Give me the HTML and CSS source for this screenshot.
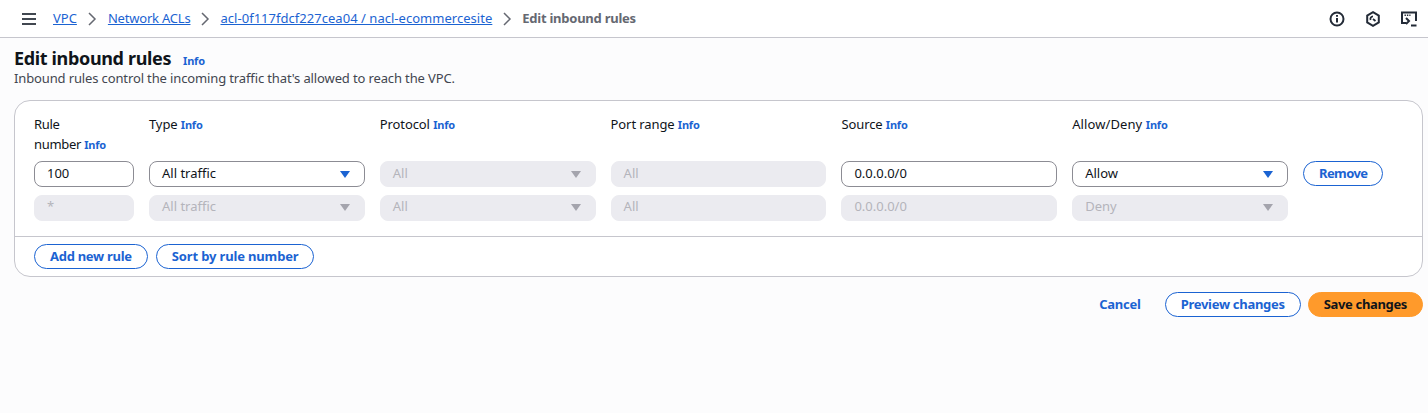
FILE: index.html
```html
<!DOCTYPE html>
<html lang="en">
<head>
    <meta charset="utf-8">
    <title>Edit inbound rules</title>
    <link rel="stylesheet" href="styles.css">
</head>
<body>
    <header class="topbar">
        <svg class="menu-icon" width="16" height="16" viewBox="0 0 16 16"><path d="M1 3h14M1 8h14M1 13h14" fill="none" stroke="#414750" stroke-width="2"/></svg>
        <nav class="crumbs">
            <a href="#">VPC</a>
            <svg class="sep" width="16" height="16" viewBox="0 0 16 16"><path d="M5 2l6 6-6 6" fill="none" stroke="#656871" stroke-width="1.5"/></svg>
            <a class="tight" href="#">Network ACLs</a>
            <svg class="sep" width="16" height="16" viewBox="0 0 16 16"><path d="M5 2l6 6-6 6" fill="none" stroke="#656871" stroke-width="1.5"/></svg>
            <a class="wide" href="#">acl-0f117fdcf227cea04 / nacl-ecommercesite</a>
            <svg class="sep" width="16" height="16" viewBox="0 0 16 16"><path d="M5 2l6 6-6 6" fill="none" stroke="#656871" stroke-width="1.5"/></svg>
            <span class="current">Edit inbound rules</span>
        </nav>
        <div class="tools">
            <svg width="16" height="16" viewBox="0 0 16 16" fill="none" stroke="#232b37" stroke-width="2"><circle cx="8" cy="8" r="6.5"/><path d="M8 7v4.5M8 4v1.8"/></svg>
            <svg width="16" height="16" viewBox="0 0 16 16" fill="none" stroke="#232b37" stroke-width="2"><path d="M8 1.2l5.8 3.4v6.8L8 14.8l-5.8-3.4V4.6z"/><path d="M5.6 9A2.6 2.6 0 0 1 8 5.4M8 8l2.5 2" stroke-width="1.8"/></svg>
            <svg width="16" height="16" viewBox="0 0 16 16" fill="none" stroke="#232b37" stroke-width="2"><path d="M5 12H1V1.5h14V10"/><path d="M3.5 4.2h6" stroke-width="1.4" stroke-dasharray="1.4 1"/><path d="M5 7l3 3-3 3M10 14.5h5.5"/></svg>
        </div>
    </header>

    <main class="page">
        <div class="title-row">
            <h1>Edit inbound rules</h1>
            <a class="info" href="#">Info</a>
        </div>
        <p class="desc">Inbound rules control the incoming traffic that's allowed to reach the VPC.</p>

        <section class="card">
            <div class="rules">
                <div class="rule-grid">
                    <div class="head head-narrow">Rule number <a class="info" href="#">Info</a></div>
                    <div class="head">Type <a class="info" href="#">Info</a></div>
                    <div class="head">Protocol <a class="info" href="#">Info</a></div>
                    <div class="head">Port range <a class="info" href="#">Info</a></div>
                    <div class="head">Source <a class="info" href="#">Info</a></div>
                    <div class="head head-wide">Allow/Deny <a class="info" href="#">Info</a></div>
                    <div></div>

                    <div class="field">100</div>
                    <div class="field select">All traffic</div>
                    <div class="field off select">All</div>
                    <div class="field off">All</div>
                    <div class="field">0.0.0.0/0</div>
                    <div class="field select">Allow</div>
                    <div><button class="btn btn-remove">Remove</button></div>

                    <div class="field off blank">*</div>
                    <div class="field off blank select">All traffic</div>
                    <div class="field off blank select">All</div>
                    <div class="field off blank">All</div>
                    <div class="field off blank">0.0.0.0/0</div>
                    <div class="field off blank select">Deny</div>
                    <div></div>
                </div>
            </div>
            <div class="card-foot">
                <button class="btn">Add new rule</button>
                <button class="btn btn-sort">Sort by rule number</button>
            </div>
        </section>

        <div class="actions">
            <a class="cancel" href="#">Cancel</a>
            <button class="btn">Preview changes</button>
            <button class="btn primary">Save changes</button>
        </div>
    </main>
</body>
</html>
```

FILE: styles.css
```css
body {
    margin: 0;
    height: 413px;
    overflow: hidden;
    font-family: "Noto Sans", sans-serif;
    font-size: 13px;
    color: #0f141a;
    background: #fcfcfd;
}
a {
    color: #1b63d2;
}
.topbar {
    display: flex;
    align-items: center;
    height: 37px;
    padding: 0 11px 0 21px;
    background: #fff;
    border-bottom: 1px solid #c6c6cd;
}
.menu-icon {
    margin-right: 16px;
}
.crumbs {
    display: flex;
    align-items: center;
    gap: 7px;
    flex: 1;
    padding-bottom: 2px;
}
.crumbs .tight {
    margin-left: 1px;
    letter-spacing: -0.2px;
}
.crumbs .wide {
    letter-spacing: 0.03px;
}
.crumbs .current {
    font-weight: 700;
    color: #656871;
    letter-spacing: -0.25px;
}
.sep {
    margin-top: 2px;
}
.tools {
    display: flex;
    gap: 20px;
}
.page {
    padding: 8px 5px 0 14px;
}
.title-row {
    display: flex;
    align-items: baseline;
    gap: 12px;
}
h1 {
    margin: 0;
    font-size: 18px;
    line-height: 24px;
    font-weight: 700;
    letter-spacing: -0.35px;
}
.desc {
    margin: -1px 0 13px;
    line-height: 18px;
    color: #424650;
    letter-spacing: -0.13px;
}
.info {
    font-size: 11px;
    font-weight: 700;
    letter-spacing: -0.2px;
    text-decoration: none;
}
.card {
    background: #fff;
    border: 1px solid #c6c6cd;
    border-radius: 16px;
}
.rules {
    padding: 13px 19px 15px;
    border-bottom: 1px solid #c6c6cd;
}
.rule-grid {
    display: grid;
    grid-template-columns: 100px repeat(5, 215.8px) 1fr;
    column-gap: 15px;
    row-gap: 8px;
}
.head {
    line-height: 20px;
    margin-bottom: -2px;
    letter-spacing: -0.1px;
}
.head-narrow {
    width: 75px;
    letter-spacing: -0.3px;
}
.head-wide {
    letter-spacing: 0.1px;
}
.field {
    box-sizing: border-box;
    height: 26px;
    line-height: 23px;
    padding: 0 12px;
    background: #fff;
    border: 1px solid #8c8c94;
    border-radius: 8px;
}
.field.off {
    background: #ebebf0;
    border-color: #ebebf0;
    color: #b4b4bb;
}
.field.blank {
    line-height: 21px;
}
.select {
    position: relative;
}
.select::after {
    content: "";
    position: absolute;
    right: 14px;
    top: 9px;
    border-left: 5px solid transparent;
    border-right: 5px solid transparent;
    border-top: 7px solid #1b63d2;
}
.off.select::after {
    border-top-color: #a4a4ad;
}
.blank.select::after {
    top: 8px;
}
.btn {
    box-sizing: border-box;
    height: 25px;
    padding: 0 15px 2px;
    font-family: inherit;
    font-size: 13px;
    font-weight: 700;
    letter-spacing: -0.28px;
    color: #1b63d2;
    background: #fff;
    border: 1px solid #1b63d2;
    border-radius: 13px;
}
.btn-remove {
    letter-spacing: -0.6px;
}
.btn-sort {
    letter-spacing: -0.15px;
}
.card-foot {
    display: flex;
    gap: 8px;
    padding: 7px 19px 7px;
}
.actions {
    display: flex;
    justify-content: flex-end;
    align-items: center;
    gap: 7px;
    margin-top: 15px;
}
.cancel {
    margin-right: 17px;
    padding-bottom: 1px;
    font-weight: 700;
    letter-spacing: -0.25px;
    text-decoration: none;
}
.btn.primary {
    color: #0f141a;
    background: #ff9a2b;
    border-color: #ff9a2b;
    letter-spacing: -0.35px;
}
```
